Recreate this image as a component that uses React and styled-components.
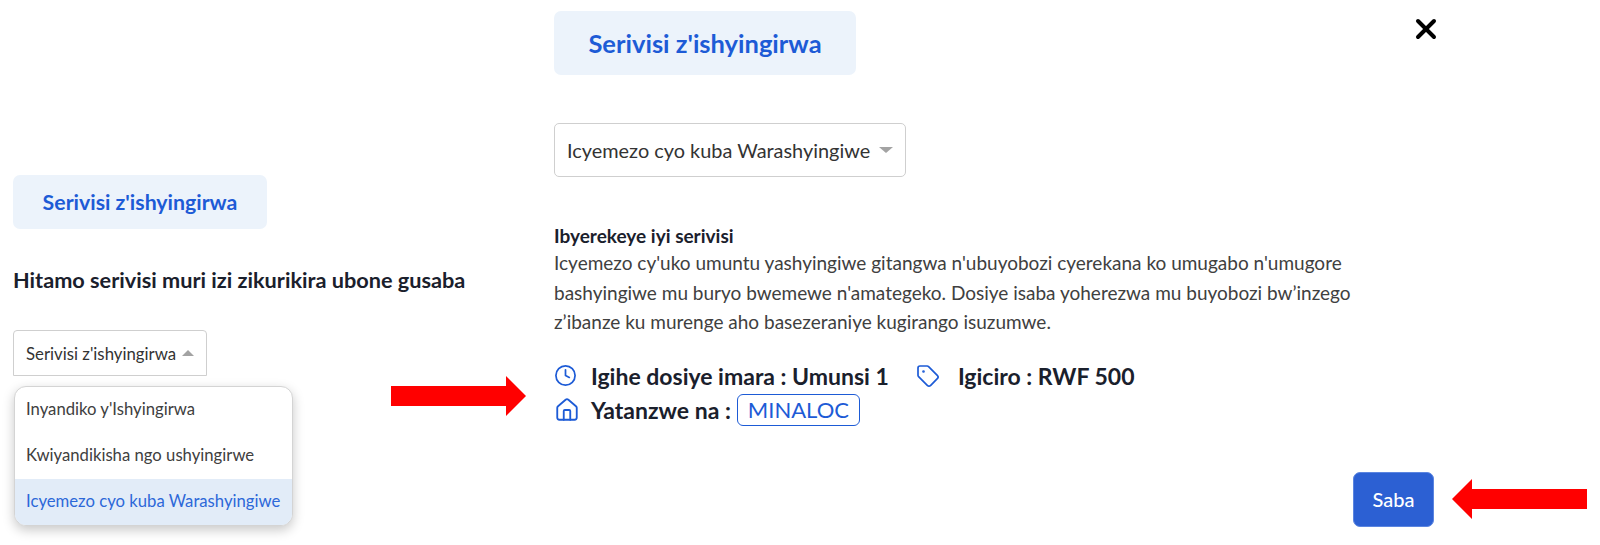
import React from 'react';
import styled, { createGlobalStyle } from 'styled-components';
import { Clock, Tag, Home, X } from 'lucide-react';

const GlobalStyle = createGlobalStyle`
  html, body {
    margin: 0;
    background: #fff;
    font-family: 'Lato', 'Liberation Sans', sans-serif;
  }
`;

// layout
const Page = styled.div`
  position: relative;
  display: flex;
  width: 1600px;
  height: 545px;
  overflow: hidden;
`;

const LeftPanel = styled.section`
  width: 541px;
  padding: 175px 0 0 13px;
  display: flex;
  flex-direction: column;
  align-items: flex-start;
`;

const RightPanel = styled.section`
  flex: 1;
  padding-top: 11px;
  display: flex;
  flex-direction: column;
  align-items: flex-start;
`;

// chips
const ServiceChip = styled.div`
  display: flex;
  align-items: center;
  justify-content: center;
  width: ${(p) => (p.$large ? 302 : 254)}px;
  height: ${(p) => (p.$large ? 64 : 54)}px;
  border-radius: 7px;
  background: #ecf3fb;
  color: #1d5bd6;
  font-size: ${(p) => (p.$large ? 25.5 : 21.3)}px;
  font-weight: 700;
`;

const Prompt = styled.h2`
  margin: 39px 0 0;
  color: #1a202c;
  font-size: 21.7px;
  line-height: 24px;
  font-weight: 700;
`;

// selects
const SelectBox = styled.div`
  display: flex;
  align-items: center;
  justify-content: space-between;
  box-sizing: border-box;
  width: ${(p) => p.$width}px;
  height: ${(p) => p.$height}px;
  padding: 0 12px;
  background: #fff;
  border: 1.5px solid #cfcfcf;
  border-radius: ${(p) => (p.$open ? '4px 4px 0 0' : '5px')};
  color: #333;
  font-size: ${(p) => p.$fontSize}px;
`;

const Caret = styled.span`
  width: 0;
  height: 0;
  border-left: ${(p) => (p.$up ? 6 : 7)}px solid transparent;
  border-right: ${(p) => (p.$up ? 6 : 7)}px solid transparent;
  ${(p) => (p.$up ? 'border-bottom: 6px solid #a3a3a3;' : 'border-top: 6px solid #a3a3a3;')}
`;

const PromptSelect = styled.div`
  margin-top: 38px;
`;

const Menu = styled.ul`
  list-style: none;
  box-sizing: border-box;
  width: 279px;
  margin: 10px 0 0 1px;
  padding: 0;
  border: 1px solid #d4d4d4;
  border-radius: 12px;
  overflow: hidden;
  background: #fff;
  box-shadow: 0 4px 12px rgba(0, 0, 0, 0.22);
`;

const MenuItem = styled.li`
  display: flex;
  align-items: center;
  box-sizing: border-box;
  height: 46px;
  padding: 0 0 2px 11px;
  font-size: 16.7px;
  color: ${(p) => (p.$active ? '#2d68d8' : '#404040')};
  background: ${(p) => (p.$active ? '#e2ecf8' : 'transparent')};
`;

// description
const ServiceSelect = styled.div`
  margin-top: 48px;
`;

const Description = styled.div`
  width: 840px;
  margin-top: 46px;
  color: #404040;
  font-size: 19px;
  line-height: 29.5px;
`;

const DescriptionTitle = styled.div`
  color: #1a202c;
  font-weight: 700;
  line-height: 25px;
`;

// meta rows
const MetaList = styled.div`
  margin-top: 23px;
  display: flex;
  flex-direction: column;
  gap: 2px;
`;

const MetaRow = styled.div`
  display: flex;
  align-items: center;
  height: 32px;
  color: #1a202c;
  font-size: 23px;
  font-weight: 700;
`;

const MetaIcon = styled.span`
  display: flex;
  width: ${(p) => p.$width || 37}px;
  color: #1d5bd6;
`;

const MetaPrice = styled.span`
  display: flex;
  align-items: center;
  margin-left: 27px;
`;

const OwnerBadge = styled.span`
  display: flex;
  align-items: center;
  justify-content: center;
  box-sizing: border-box;
  width: 123px;
  height: 32px;
  margin-left: 6px;
  border: 1px solid #1d5bd6;
  border-radius: 6px;
  color: #1d5bd6;
  font-size: 22px;
  font-weight: 400;
`;

// footer
const Footer = styled.div`
  align-self: stretch;
  display: flex;
  justify-content: flex-end;
  margin-top: 46px;
  padding-right: 166px;
`;

const NextButton = styled.button`
  width: 81px;
  height: 55px;
  border: 1px solid #5b85e0;
  border-radius: 7px;
  background: #2c60d3;
  color: #fff;
  font-family: inherit;
  font-size: 20px;
  font-weight: 500;
`;

// overlays
const CloseButton = styled.span`
  position: absolute;
  left: 1410px;
  top: 13px;
  display: flex;
  color: #000;
`;

const Annotation = styled.svg`
  position: absolute;
  left: ${(p) => p.$left}px;
  top: ${(p) => p.$top}px;
`;

const Arrow = ({ left, top, flip }) => (
  <Annotation $left={left} $top={top} width="135" height="40" viewBox="0 0 135 40">
    <polygon
      fill="#ff0000"
      points="0,10 115,10 115,0 135,20 115,40 115,30 0,30"
      transform={flip ? 'rotate(180 67.5 20)' : undefined}
    />
  </Annotation>
);

const App = () => (
  <Page>
    <GlobalStyle />
    <LeftPanel>
      <ServiceChip>Serivisi z'ishyingirwa</ServiceChip>
      <Prompt>Hitamo serivisi muri izi zikurikira ubone gusaba</Prompt>
      <PromptSelect>
        <SelectBox $width={194} $height={46} $fontSize={16.8} $open>
          Serivisi z'ishyingirwa
          <Caret $up />
        </SelectBox>
      </PromptSelect>
      <Menu>
        <MenuItem>Inyandiko y'Ishyingirwa</MenuItem>
        <MenuItem>Kwiyandikisha ngo ushyingirwe</MenuItem>
        <MenuItem $active>Icyemezo cyo kuba Warashyingiwe</MenuItem>
      </Menu>
    </LeftPanel>

    <RightPanel>
      <ServiceChip $large>Serivisi z'ishyingirwa</ServiceChip>
      <ServiceSelect>
        <SelectBox $width={352} $height={54} $fontSize={19.9}>
          Icyemezo cyo kuba Warashyingiwe
          <Caret />
        </SelectBox>
      </ServiceSelect>
      <Description>
        <DescriptionTitle>Ibyerekeye iyi serivisi</DescriptionTitle>
        Icyemezo cy'uko umuntu yashyingiwe gitangwa n'ubuyobozi cyerekana ko umugabo n'umugore
        <br />
        bashyingiwe mu buryo bwemewe n'amategeko. Dosiye isaba yoherezwa mu buyobozi bw’inzego
        <br />
        z’ibanze ku murenge aho basezeraniye kugirango isuzumwe.
      </Description>
      <MetaList>
        <MetaRow>
          <MetaIcon>
            <Clock size={23} strokeWidth={1.8} />
          </MetaIcon>
          Igihe dosiye imara : Umunsi 1
          <MetaPrice>
            <MetaIcon $width={42}>
              <Tag size={24} strokeWidth={1.7} />
            </MetaIcon>
            Igiciro : RWF 500
          </MetaPrice>
        </MetaRow>
        <MetaRow>
          <MetaIcon>
            <Home size={26} strokeWidth={1.7} />
          </MetaIcon>
          Yatanzwe na :
          <OwnerBadge>MINALOC</OwnerBadge>
        </MetaRow>
      </MetaList>
      <Footer>
        <NextButton>Saba</NextButton>
      </Footer>
    </RightPanel>

    <CloseButton>
      <X size={32} strokeWidth={3} />
    </CloseButton>
    <Arrow left={391} top={376} />
    <Arrow left={1452} top={479} flip />
  </Page>
);

export default App;
